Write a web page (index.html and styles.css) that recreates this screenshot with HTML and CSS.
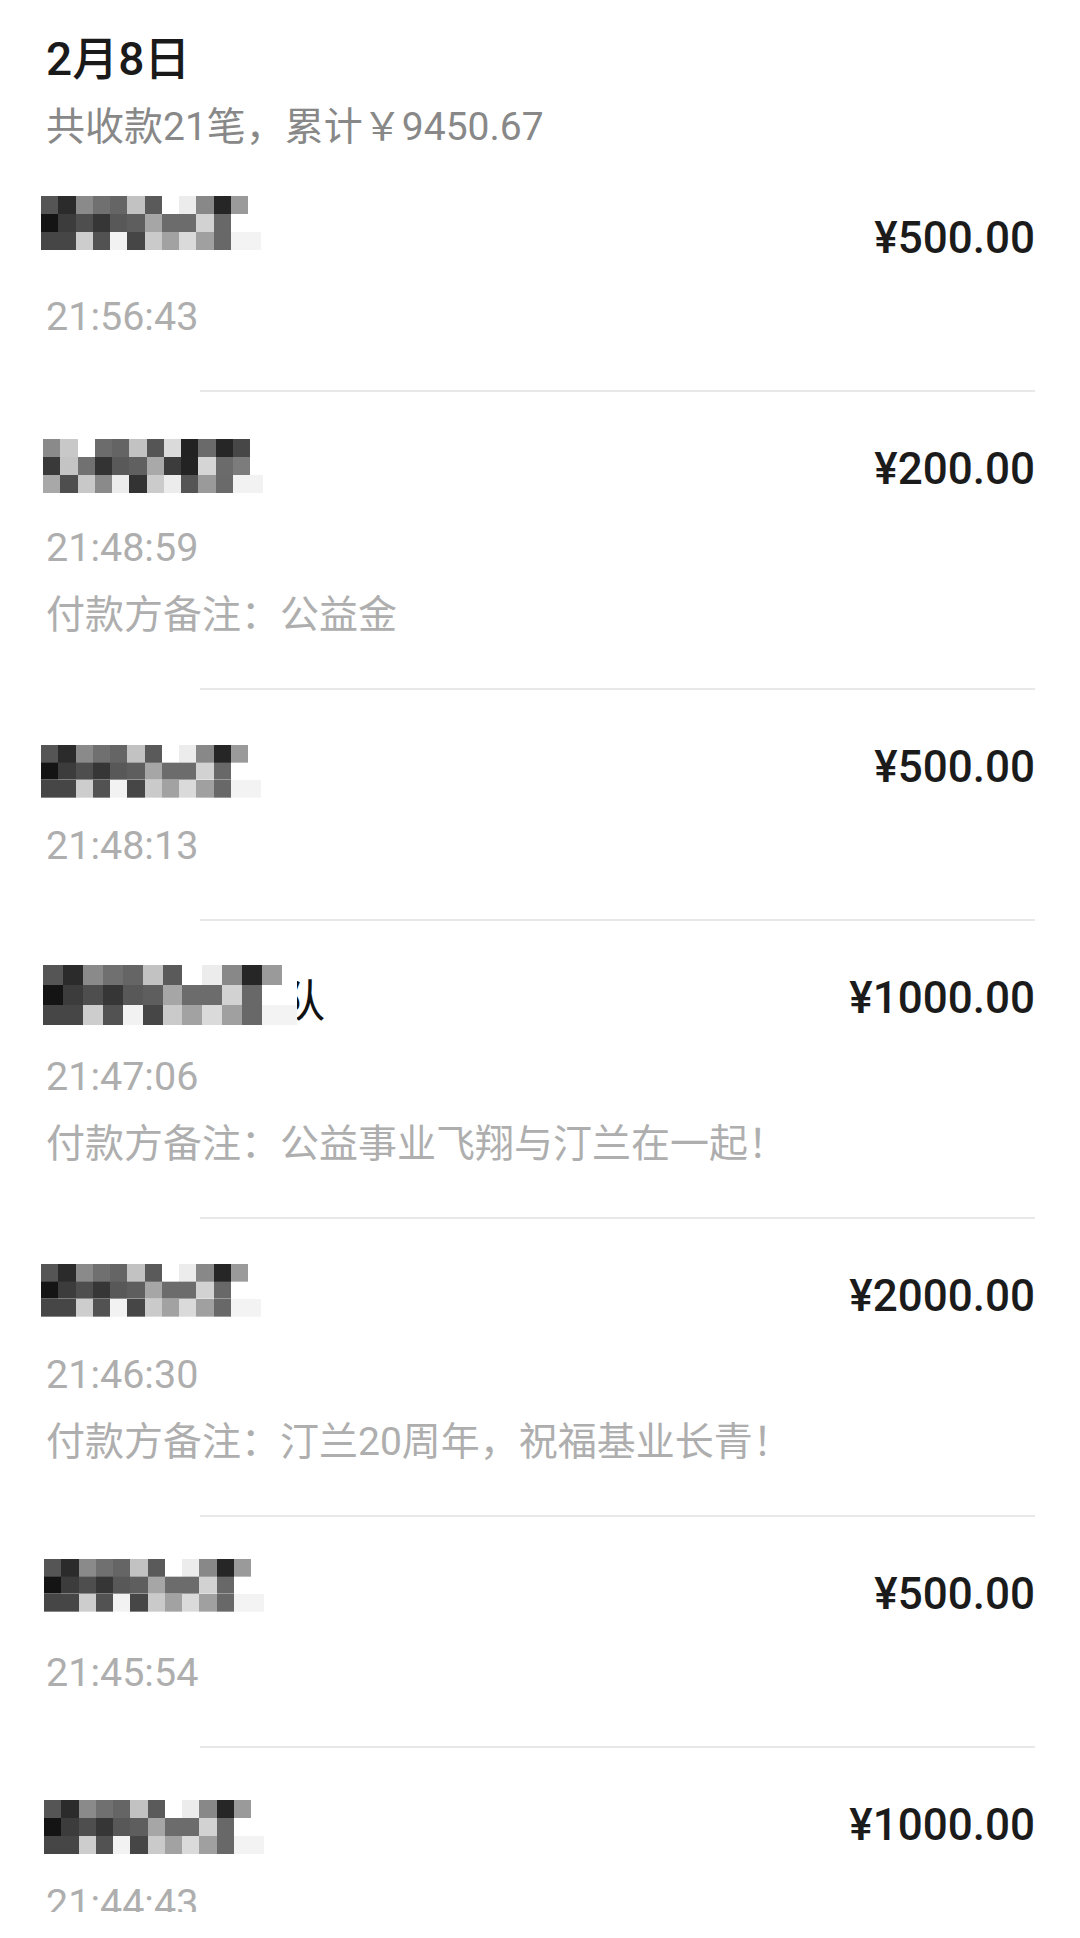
FILE: index.html
```html
<!DOCTYPE html>
<html lang="zh-CN">
<head>
<meta charset="utf-8">
<title>收款记录</title>
<link rel="stylesheet" href="styles.css">
</head>
<body>
<div class="page">
  <header class="header">
    <h1 class="title">2月8日</h1>
    <div class="summary">共收款21笔，累计￥9450.67</div>
  </header>
  <div class="list">
    <div class="item">
      <div class="row"><div class="mosaic"></div><div class="amount">¥500.00</div></div>
      <div class="time">21:56:43</div>
    </div>
    <div class="item">
      <div class="row"><div class="mosaic alt"></div><div class="amount">¥200.00</div></div>
      <div class="time">21:48:59</div>
      <div class="note">付款方备注：公益金</div>
    </div>
    <div class="item">
      <div class="row"><div class="mosaic"></div><div class="amount">¥500.00</div></div>
      <div class="time">21:48:13</div>
    </div>
    <div class="item">
      <div class="row"><div class="mosaic big"></div><span class="tail">队</span><div class="amount">¥1000.00</div></div>
      <div class="time">21:47:06</div>
      <div class="note">付款方备注：公益事业飞翔与汀兰在一起！</div>
    </div>
    <div class="item">
      <div class="row"><div class="mosaic"></div><div class="amount">¥2000.00</div></div>
      <div class="time">21:46:30</div>
      <div class="note">付款方备注：汀兰20周年，祝福基业长青！</div>
    </div>
    <div class="item">
      <div class="row"><div class="mosaic"></div><div class="amount">¥500.00</div></div>
      <div class="time">21:45:54</div>
    </div>
    <div class="item">
      <div class="row"><div class="mosaic"></div><div class="amount">¥1000.00</div></div>
      <div class="time">21:44:43</div>
    </div>
  </div>
</div>
<div class="bottom-cover"></div>
</body>
</html>
```
FILE: styles.css
```css
html, body {
  margin: 0;
  background: #ffffff;
}
body {
  font-family: Roboto, "Noto Sans CJK SC", sans-serif;
  overflow: hidden;
}
.page {
  padding: 0 45px 0 46px;
}
.header {
  padding-top: 31px;
  padding-bottom: 9px;
}
.title {
  margin: 0;
  font-size: 46px;
  line-height: 56px;
  font-weight: 500;
  color: #1a1a1a;
}
.summary {
  margin-top: 15px;
  font-size: 39px;
  line-height: 50px;
  color: #888888;
}
.item {
  padding-top: 47px;
}
.item::after {
  content: "";
  display: block;
  height: 2px;
  margin-top: 48px;
  margin-left: 154px;
  background: #e8e8e8;
}
.row {
  display: flex;
  align-items: center;
  height: 60px;
}
.amount {
  margin-left: auto;
  font-size: 44px;
  font-weight: 500;
  color: #1b1b1b;
}
.time {
  margin-top: 24px;
  font-size: 39.5px;
  line-height: 50px;
  color: #aeaeae;
}
.note {
  margin-top: 17px;
  font-size: 39px;
  line-height: 50px;
  color: #aeaeae;
}
.tail {
  font-size: 44px;
  color: #111111;
  margin-left: -16px;
}

/* pixelated (mosaic) payer names */
.mosaic {
  position: relative;
  z-index: 1;
  flex: none;
  width: 220px;
  height: 54px;
  background-repeat: no-repeat;
  background-size: 100% 33.34%;
  background-position: 0 0, 0 50%, 0 100%;
  background-image:
    linear-gradient(90deg, #555555 0 7.84%, #2b2b2b 0 15.69%, #8a8a8a 0 23.53%, #707070 0 31.37%, #656565 0 39.22%, #c2c2c2 0 47.06%, #5a5a5a 0 54.9%, #ffffff 0 62.75%, #ececec 0 70.59%, #888888 0 78.43%, #262626 0 86.27%, #9a9a9a 0 94.12%, #ffffff 0 100%),
    linear-gradient(90deg, #141414 0 7.84%, #3c3c3c 0 15.69%, #4e4e4e 0 23.53%, #363636 0 31.37%, #585858 0 39.22%, #5e5e5e 0 47.06%, #a6a6a6 0 54.9%, #6c6c6c 0 62.75%, #6c6c6c 0 70.59%, #d2d2d2 0 78.43%, #686868 0 86.27%, #ffffff 0 94.12%, #ffffff 0 100%),
    linear-gradient(90deg, #464646 0 7.84%, #464646 0 15.69%, #cdcdcd 0 23.53%, #525252 0 31.37%, #f2f2f2 0 39.22%, #464646 0 47.06%, #cacaca 0 54.9%, #a2a2a2 0 62.75%, #dadada 0 70.59%, #a0a0a0 0 78.43%, #686868 0 86.27%, #f3f3f3 0 94.12%, #f3f3f3 0 100%);
}
.mosaic.alt {
  background-image:
    linear-gradient(90deg, #8a8a8a 0 7.84%, #c8c8c8 0 15.69%, #ffffff 0 23.53%, #6c6c6c 0 31.37%, #646464 0 39.22%, #c2c2c2 0 47.06%, #555555 0 54.9%, #dadada 0 62.75%, #222222 0 70.59%, #6a6a6a 0 78.43%, #262626 0 86.27%, #474747 0 94.12%, #ffffff 0 100%),
    linear-gradient(90deg, #393939 0 7.84%, #c4c4c4 0 15.69%, #717171 0 23.53%, #333333 0 31.37%, #595959 0 39.22%, #606060 0 47.06%, #a9a9a9 0 54.9%, #3c3c3c 0 62.75%, #232323 0 70.59%, #d5d5d5 0 78.43%, #6b6b6b 0 86.27%, #7c7c7c 0 94.12%, #ffffff 0 100%),
    linear-gradient(90deg, #a8a8a8 0 7.84%, #4e4e4e 0 15.69%, #c8c8c8 0 23.53%, #8a8a8a 0 31.37%, #ececec 0 39.22%, #333333 0 47.06%, #cbcbcb 0 54.9%, #ececec 0 62.75%, #555555 0 70.59%, #9a9a9a 0 78.43%, #6a6a6a 0 86.27%, #f2f2f2 0 94.12%, #f2f2f2 0 100%);
}
.mosaic.big {
  width: 254px;
  height: 61px;
}
.item:nth-child(1) .mosaic { margin-left: -5px; transform: translateY(-15px); }
.item:nth-child(2) .mosaic { margin-left: -3px; transform: translateY(-3px); }
.item:nth-child(3) .mosaic { margin-left: -5px; height: 53px; transform: translateY(4px); }
.item:nth-child(4) .mosaic { margin-left: -3px; transform: translateY(-3px); }
.item:nth-child(5) .mosaic { margin-left: -5px; height: 53px; transform: translateY(-6px); }
.item:nth-child(6) .mosaic { margin-left: -2px; height: 53px; transform: translateY(-9px); }
.item:nth-child(7) .mosaic { margin-left: -2px; transform: translateY(2px); }

.bottom-cover {
  position: fixed;
  left: 0;
  right: 0;
  bottom: 0;
  height: 26px;
  background: #ffffff;
}
```
